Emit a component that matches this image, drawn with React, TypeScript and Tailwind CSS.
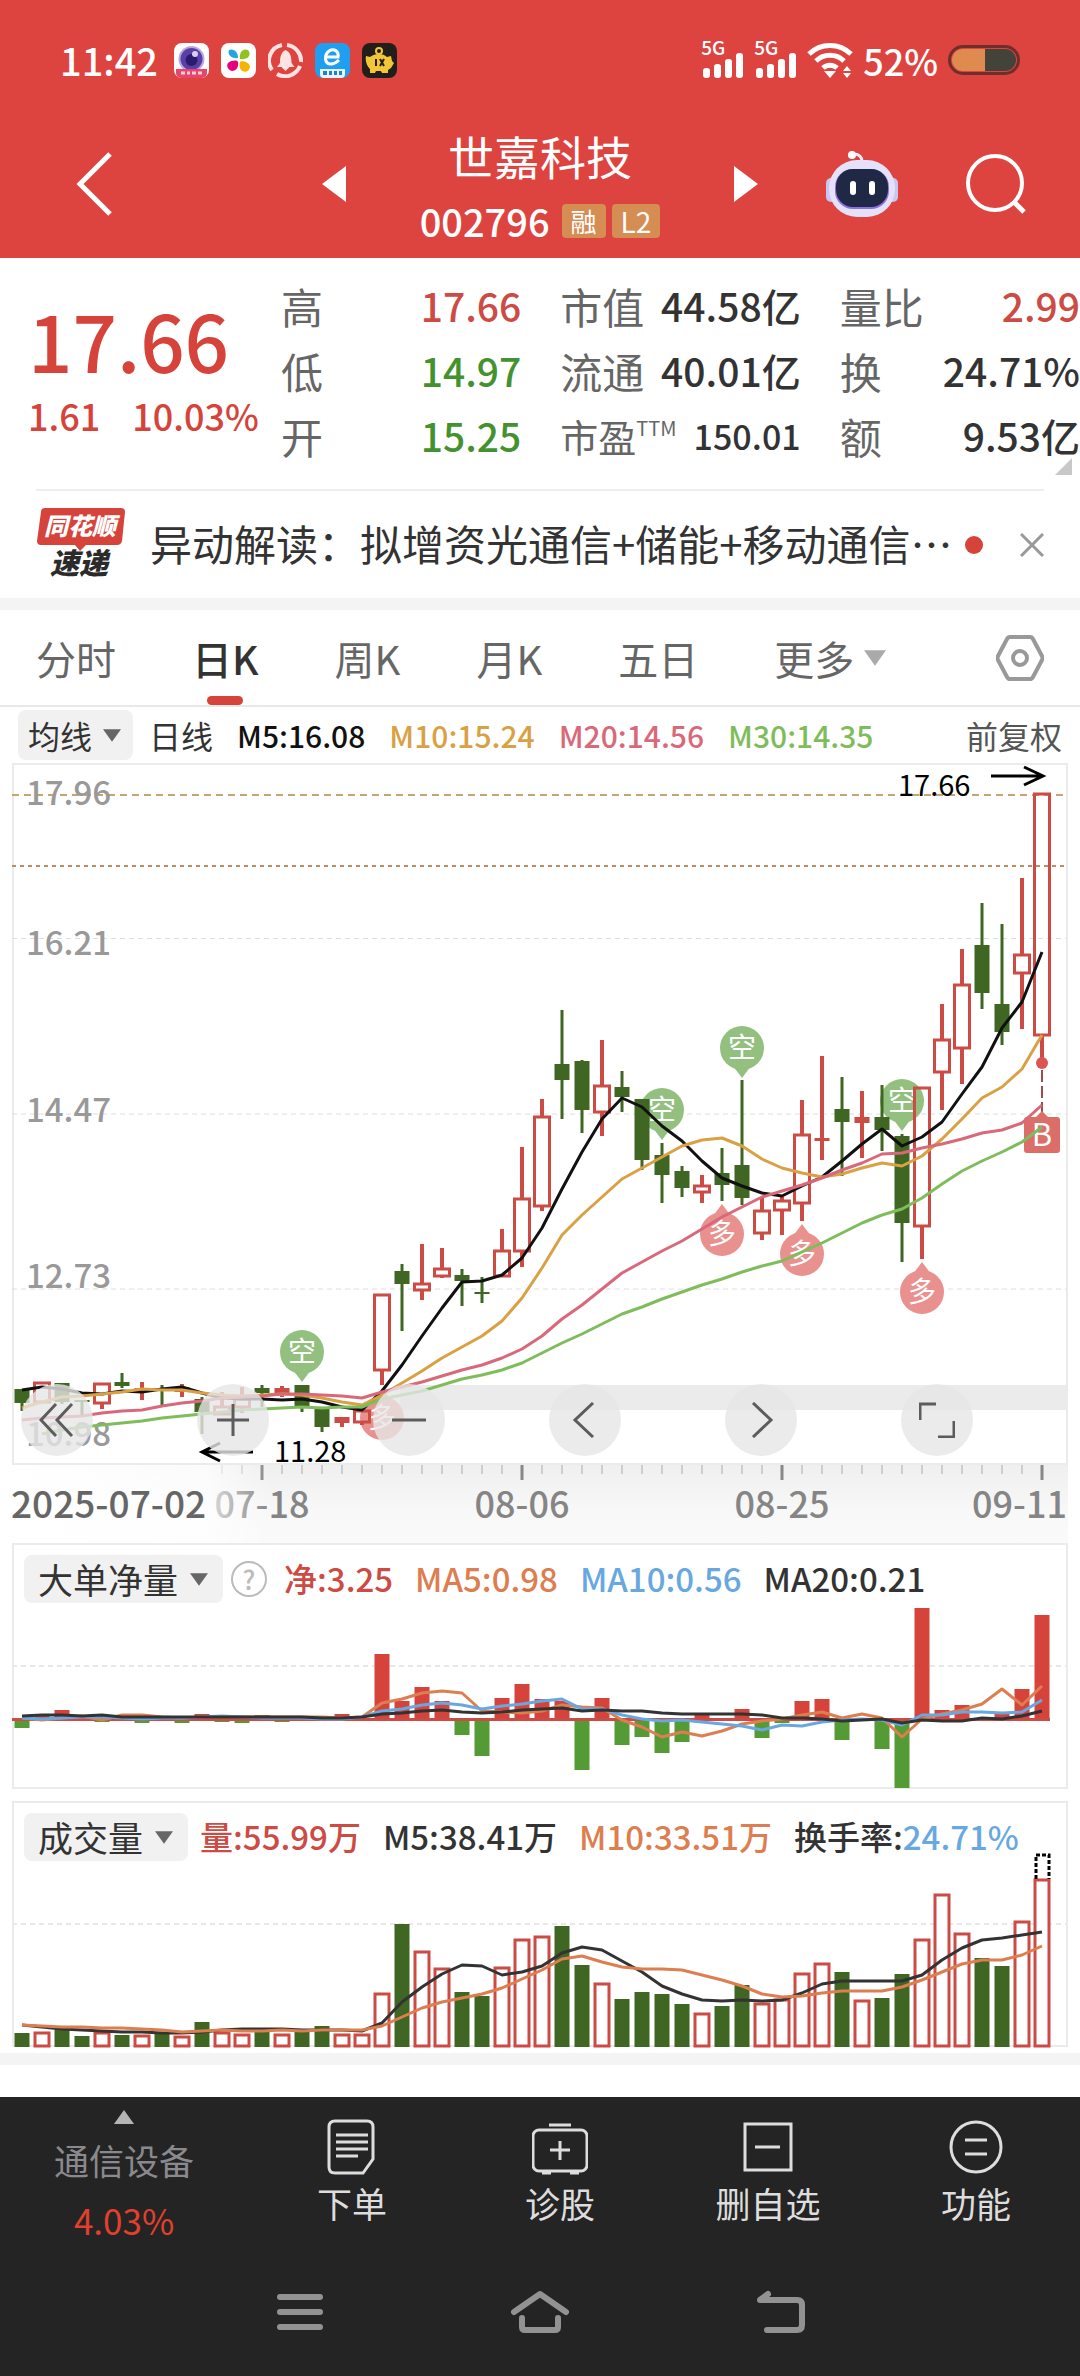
import type { ReactNode } from "react";

type Candle = [kind: "r" | "f" | "g", high: number, top: number, bottom: number, low: number];

// r = rising (hollow), f = rising with a thin filled body, g = falling
const candles: Candle[] = [
  ["g", 1389, 1389, 1403, 1411], ["r", 1383, 1383, 1402, 1402], ["g", 1383, 1383, 1402, 1404], ["g", 1400, 1400, 1402, 1415],
  ["r", 1384, 1384, 1403, 1409], ["g", 1373, 1382, 1386, 1388], ["f", 1382, 1388, 1391, 1400], ["g", 1385, 1388, 1390, 1406],
  ["f", 1384, 1387, 1392, 1397], ["g", 1397, 1399, 1412, 1434], ["r", 1392, 1407, 1414, 1414], ["r", 1387, 1399, 1407, 1413],
  ["g", 1385, 1388, 1393, 1407], ["f", 1386, 1388, 1393, 1397], ["g", 1385, 1385, 1406, 1412], ["g", 1409, 1409, 1427, 1432],
  ["f", 1417, 1417, 1423, 1427], ["r", 1411, 1411, 1422, 1425], ["r", 1295, 1295, 1370, 1385], ["g", 1264, 1271, 1284, 1331],
  ["r", 1244, 1284, 1290, 1300], ["r", 1248, 1269, 1276, 1278], ["g", 1269, 1275, 1281, 1306], ["g", 1277, 1292, 1294, 1303],
  ["r", 1229, 1251, 1276, 1276], ["r", 1147, 1199, 1251, 1267], ["r", 1099, 1117, 1206, 1211], ["g", 1010, 1064, 1080, 1119],
  ["g", 1060, 1061, 1110, 1133], ["r", 1040, 1086, 1112, 1136], ["g", 1071, 1087, 1097, 1112], ["g", 1099, 1099, 1160, 1170],
  ["g", 1143, 1155, 1175, 1203], ["g", 1166, 1171, 1188, 1197], ["r", 1175, 1186, 1192, 1203], ["g", 1148, 1173, 1185, 1201],
  ["g", 1080, 1165, 1198, 1205], ["r", 1197, 1211, 1233, 1240], ["r", 1197, 1201, 1210, 1235], ["r", 1100, 1135, 1203, 1221],
  ["f", 1056, 1138, 1141, 1160], ["g", 1077, 1109, 1122, 1176], ["f", 1091, 1117, 1123, 1158], ["g", 1085, 1117, 1130, 1151],
  ["g", 1134, 1136, 1223, 1262], ["r", 1088, 1088, 1226, 1259], ["r", 1004, 1040, 1072, 1110], ["r", 949, 985, 1048, 1084],
  ["g", 903, 945, 993, 1009], ["g", 924, 1004, 1032, 1045], ["r", 878, 955, 973, 1029], ["r", 794, 794, 1035, 1063],
];

const ma5 = [1390, 1387, 1389, 1393, 1394, 1391, 1392, 1389, 1387, 1393, 1398, 1399, 1399, 1400, 1399, 1402, 1407, 1410, 1391, 1365, 1336, 1308, 1282, 1281, 1275, 1258, 1228, 1189, 1152, 1119, 1098, 1107, 1126, 1141, 1161, 1178, 1186, 1193, 1196, 1186, 1177, 1161, 1144, 1129, 1146, 1137, 1122, 1094, 1067, 1028, 1002, 952];
const ma10 = [1408, 1402, 1397, 1396, 1394, 1392, 1389, 1390, 1390, 1393, 1395, 1396, 1395, 1394, 1395, 1398, 1402, 1405, 1395, 1383, 1371, 1358, 1347, 1336, 1321, 1298, 1268, 1235, 1215, 1197, 1179, 1168, 1157, 1146, 1140, 1138, 1146, 1159, 1168, 1173, 1177, 1174, 1168, 1163, 1166, 1156, 1139, 1119, 1098, 1087, 1069, 1035];
const ma20 = [1420, 1418, 1417, 1416, 1413, 1411, 1410, 1406, 1403, 1401, 1398, 1397, 1396, 1394, 1394, 1395, 1396, 1398, 1392, 1387, 1382, 1376, 1370, 1365, 1358, 1349, 1336, 1319, 1305, 1289, 1273, 1262, 1251, 1241, 1229, 1217, 1207, 1197, 1191, 1185, 1178, 1170, 1163, 1154, 1153, 1148, 1144, 1139, 1133, 1130, 1123, 1105];
const ma30 = [1434, 1430, 1427, 1425, 1423, 1421, 1418, 1416, 1414, 1412, 1410, 1409, 1408, 1407, 1408, 1407, 1407, 1399, 1395, 1391, 1385, 1379, 1375, 1370, 1363, 1353, 1343, 1334, 1324, 1314, 1307, 1299, 1292, 1285, 1279, 1272, 1266, 1261, 1252, 1243, 1233, 1223, 1215, 1209, 1198, 1184, 1171, 1161, 1152, 1142, 1127];

// net large-order flow, measured from the zero line
const flow = [-8, 5, 9, 0, -2, 0, -3, 0, -3, 5, -2, -3, 4, -2, 0, 0, 5, 1, 65, 18, 32, 18, -15, -36, 21, 35, 20, 18, -50, 21, -25, -17, -33, -22, 4, 0, 10, -18, -3, 18, 20, -20, 0, -29, -68, 111, 9, 14, 1, 5, 30, 104];
const flow5 = [1718, 1720, 1718, 1716, 1720, 1715, 1715, 1717, 1718, 1717, 1717, 1717, 1717, 1717, 1717, 1717, 1718, 1717, 1703, 1699, 1693, 1691, 1693, 1711, 1712, 1713, 1711, 1705, 1707, 1708, 1720, 1727, 1737, 1732, 1736, 1731, 1724, 1721, 1719, 1715, 1712, 1718, 1714, 1718, 1737, 1719, 1714, 1710, 1704, 1689, 1705, 1686];
const flow10 = [1718, 1719, 1718, 1717, 1717, 1718, 1719, 1718, 1718, 1717, 1716, 1717, 1718, 1718, 1718, 1719, 1719, 1717, 1711, 1709, 1705, 1703, 1705, 1709, 1706, 1704, 1701, 1699, 1709, 1709, 1715, 1719, 1721, 1720, 1722, 1724, 1726, 1730, 1725, 1726, 1722, 1720, 1719, 1720, 1725, 1715, 1715, 1712, 1712, 1713, 1712, 1700];
const flow20 = [1716, 1715, 1715, 1716, 1715, 1717, 1717, 1717, 1717, 1717, 1717, 1717, 1717, 1717, 1717, 1718, 1718, 1717, 1714, 1713, 1711, 1710, 1712, 1713, 1712, 1710, 1709, 1708, 1711, 1710, 1711, 1711, 1713, 1714, 1714, 1714, 1714, 1715, 1718, 1718, 1719, 1721, 1720, 1719, 1723, 1720, 1721, 1721, 1718, 1719, 1716, 1711];

const volume = [2033, 2032, 2028, 2036, 2032, 2035, 2035, 2033, 2036, 2022, 2032, 2034, 2031, 2034, 2031, 2026, 2034, 2034, 1993, 1924, 1951, 1968, 1992, 1996, 1967, 1939, 1936, 1926, 1965, 1983, 1999, 1992, 1994, 2004, 2013, 2006, 1985, 2003, 1999, 1973, 1963, 1972, 2000, 1998, 1974, 1939, 1894, 1933, 1958, 1966, 1921, 1879];
const volume5 = [2025, 2027, 2029, 2030, 2031, 2032, 2032, 2033, 2033, 2032, 2030, 2029, 2029, 2029, 2030, 2030, 2030, 2031, 2023, 2002, 1987, 1974, 1965, 1966, 1975, 1972, 1966, 1953, 1947, 1950, 1961, 1972, 1986, 1994, 2000, 2001, 2000, 2001, 2000, 1993, 1984, 1981, 1981, 1981, 1981, 1975, 1960, 1948, 1940, 1938, 1935, 1932];
const volume10 = [2025, 2026, 2027, 2027, 2028, 2028, 2029, 2030, 2032, 2031, 2030, 2031, 2031, 2030, 2031, 2030, 2030, 2030, 2026, 2017, 2008, 2002, 1998, 1994, 1988, 1979, 1970, 1959, 1956, 1962, 1967, 1969, 1969, 1970, 1975, 1980, 1986, 1994, 1997, 1996, 1993, 1991, 1991, 1991, 1987, 1980, 1972, 1964, 1960, 1960, 1955, 1946];

const barX = (i: number) => 22 + i * 20;
const toPoints = (ys: number[], start = 0) => ys.map((y, i) => `${barX(i + start)},${y}`).join(" ");

const RED = "#cc4b44";
const GREEN = "#3f6622";
const CJK = "'Noto Sans CJK SC', sans-serif";

function Line({ ys, color, start = 0 }: { ys: number[]; color: string; start?: number }) {
  return <polyline points={toPoints(ys, start)} fill="none" stroke={color} strokeWidth="3" strokeLinejoin="round" />;
}

function Caret({ className, up }: { className: string; up?: boolean }) {
  return (
    <svg viewBox="0 0 20 14" className={className} fill="currentColor" aria-hidden="true">
      <path d={up ? "M10 0L20 14H0z" : "M0 0h20L10 14z"} />
    </svg>
  );
}

function Picker({ label, options, small }: { label: string; options: string[]; small?: boolean }) {
  return (
    <label className="relative flex items-center shrink-0">
      <select
        aria-label={label}
        className={
          small
            ? "appearance-none h-[50px] pl-[10px] pr-10 rounded-lg bg-[#f1f1f1] text-[32px] leading-[44px] font-normal text-[#333]"
            : "appearance-none h-12 pl-[14px] pr-11 rounded-lg bg-[#f1f1f1] text-[35px] leading-[44px] font-normal text-[#333]"
        }
      >
        {options.map((option) => (
          <option key={option}>{option}</option>
        ))}
      </select>
      <Caret className={small ? "absolute right-3 w-[18px] h-[13px] text-[#666] pointer-events-none" : "absolute right-[15px] w-[18px] h-[13px] text-[#666] pointer-events-none"} />
    </label>
  );
}

function Signal() {
  return (
    <div className="relative w-[43px] h-9 shrink-0">
      <span className="absolute left-0 -top-[5px] text-[19px] leading-5 font-medium">5G</span>
      <svg viewBox="0 0 43 36" className="w-full h-full" fill="#fff" aria-hidden="true">
        <rect x="2" y="26" width="7" height="10" rx="3" />
        <rect x="13" y="22" width="7" height="14" rx="3" />
        <rect x="24" y="17" width="7" height="19" rx="3" />
        <rect x="35" y="11" width="7" height="25" rx="3" />
      </svg>
    </div>
  );
}

function StatusBar() {
  return (
    <div className="flex items-center justify-between h-[120px] px-[60px] text-white">
      <div className="flex items-center gap-3">
        <span className="text-[38px] leading-[44px] font-medium mr-1">11:42</span>
        <svg viewBox="0 0 35 35" className="w-[35px] h-[35px]">
          <rect width="35" height="35" rx="8" fill="#fff" />
          <circle cx="17.5" cy="16" r="13" fill="#b9a8dd" />
          <circle cx="17.5" cy="16" r="11" fill="#5a3fa8" />
          <circle cx="17.5" cy="17" r="6" fill="#2a1c6b" />
          <circle cx="21" cy="11" r="3" fill="#d9cdf5" />
          <path d="M2 26h31v4a5 5 0 0 1-5 5H7a5 5 0 0 1-5-5z" fill="#e8456a" />
          <path d="M7 30h4M13 30h3M18 30h4M24 30h4" stroke="#ffd0da" strokeWidth="3" />
        </svg>
        <svg viewBox="0 0 35 35" className="w-[35px] h-[35px]">
          <rect width="35" height="35" rx="8" fill="#fff" />
          <path d="M8 7c5-2 9 2 9 8-6 1-11-3-9-8z" fill="#25a5e0" />
          <path d="M27 7c4 5 0 10-8 9-1-7 3-11 8-9z" fill="#8fc31f" />
          <path d="M7 20c4-3 9-3 10-1 1 5-2 9-6 9-4-1-6-5-4-8z" fill="#e4007f" />
          <path d="M20 18c5 0 9 3 9 6-1 5-6 6-9 3-2-3-2-7 0-9z" fill="#f8b500" />
        </svg>
        <svg viewBox="0 0 35 35" className="w-[35px] h-[35px]" fill="none">
          <path d="M14 2A16 16 0 0 0 4 27M9 31a16 16 0 0 0 23-8M33 19A16 16 0 0 0 19 2" stroke="#ffe3e3" strokeWidth="4" />
          <path d="M17.500 7c5 2 6 7 6 13l3 4h-5l-4 4-4-4H9l3-4c0-6 1-11 5.500-13z" fill="#ffe3e3" />
        </svg>
        <svg viewBox="0 0 35 35" className="w-[35px] h-[35px]" fill="none">
          <rect width="35" height="35" rx="8" fill="#1f9ff0" />
          <path d="M12 14h11c1-6-4-9-9-6-5 4-5 13 2 13 3 0 6-2 8-4" stroke="#fff" strokeWidth="3" />
          <path d="M5 26h25v5a4 4 0 0 1-4 4H9a4 4 0 0 1-4-4z" fill="#e8f6ff" />
          <path d="M8 30h4M14 30h3M19 30h3M24 30h3" stroke="#1f7fd0" strokeWidth="4" />
        </svg>
        <svg viewBox="0 0 35 35" className="w-[35px] h-[35px]">
          <rect width="35" height="35" rx="8" fill="#221f1b" />
          <circle cx="17" cy="8" r="3" fill="none" stroke="#f3c63a" strokeWidth="2" />
          <path d="M4 13l4 1c5-4 13-4 17 0l4-1 1 5 2 2-3 5-3 2v3h-6l-1-2h-5l-1 2H8v-4c-3-3-5-8-4-13z" fill="#f3c63a" />
          <path d="M14 16v7M18 16l4 7M22 16l-4 7" stroke="#221f1b" strokeWidth="2" />
        </svg>
      </div>
      <div className="flex items-center gap-[10px]">
        <Signal />
        <Signal />
        <svg viewBox="0 0 46 36" className="w-[46px] h-9" fill="none" stroke="#fff" strokeWidth="5" aria-label="WLAN">
          <path d="M2 12a30 30 0 0 1 42 0M9 19a20 20 0 0 1 28 0M16 26a10 10 0 0 1 14 0" />
          <path d="M17 29h12l-6 7zM36 29l4-5 4 5zM36 31h8l-4 5z" fill="#fff" stroke="none" />
        </svg>
        <span className="text-[36px] leading-[44px] font-medium">52%</span>
        <svg viewBox="0 0 72 30" className="w-[72px] h-[30px]" aria-label="Battery">
          <rect x="1.500" y="1.500" width="69" height="27" rx="13.500" fill="none" stroke="#6e2f2c" strokeWidth="3" />
          <path d="M37 4H15a11 11 0 0 0 0 22h22z" fill="#df8a4f" />
          <path d="M37 4h20a11 11 0 0 1 0 22H37z" fill="#43433a" />
        </svg>
      </div>
    </div>
  );
}

function TitleBar() {
  return (
    <div className="grid grid-cols-[1fr_auto_1fr] items-center h-[138px] pb-[10px] text-white">
      <div className="pl-[76px] flex">
        <button aria-label="返回">
          <svg viewBox="0 0 36 64" className="w-9 h-16" fill="none" stroke="#fff" strokeWidth="5">
            <path d="M34 2L4 32l30 30" />
          </svg>
        </button>
      </div>
      <div className="flex items-center justify-between w-[437px]">
        <button aria-label="上一只">
          <svg viewBox="0 0 24 36" className="w-6 h-9" fill="#fff"><path d="M24 0v36L0 18z" /></svg>
        </button>
        <div className="flex flex-col items-center">
          <h1 className="text-[46px] leading-[50px]">世嘉科技</h1>
          <div className="mt-6 flex items-center gap-[6px]">
            <span className="text-[38px] leading-[34px] font-medium mr-[6px]">002796</span>
            <span className="bg-[#d68d54] rounded px-[9px] text-[26px] leading-[34px]">融</span>
            <span className="bg-[#d68d54] rounded px-[9px] text-[28px] leading-[34px]">L2</span>
          </div>
        </div>
        <button aria-label="下一只">
          <svg viewBox="0 0 24 36" className="w-6 h-9" fill="#fff"><path d="M0 0v36l24-18z" /></svg>
        </button>
      </div>
      <div className="flex items-center justify-end gap-[68px] pr-[54px]">
        <button aria-label="智能助手">
          <svg viewBox="0 0 72 68" className="w-[72px] h-[68px]">
            <path d="M36 12c0-6-3-8-9-8" fill="none" stroke="#f4ecfa" strokeWidth="3" />
            <circle cx="26" cy="5" r="4" fill="#fff" />
            <rect x="0" y="28" width="10" height="24" rx="5" fill="#c9c6f2" />
            <rect x="62" y="28" width="10" height="24" rx="5" fill="#c9c6f2" />
            <rect x="3" y="10" width="66" height="57" rx="28" fill="#e4e1f9" />
            <rect x="9" y="19" width="54" height="40" rx="18" fill="#8d6fe0" />
            <rect x="10" y="19" width="52" height="38" rx="17" fill="#1f2946" />
            <rect x="24" y="31" width="6" height="14" rx="3" fill="#fff" />
            <rect x="43" y="31" width="6" height="14" rx="3" fill="#fff" />
          </svg>
        </button>
        <button aria-label="搜索">
          <svg viewBox="0 0 60 60" className="w-[60px] h-[60px]" fill="none" stroke="#fff" strokeWidth="4">
            <circle cx="29" cy="29" r="27" />
            <path d="M47 47l11 11" strokeWidth="5" />
          </svg>
        </button>
      </div>
    </div>
  );
}

function Stat({ label, value, tone = "text-[#333]" }: { label: ReactNode; value: string; tone?: string }) {
  return (
    <div className="flex items-center justify-between h-[65px] whitespace-nowrap">
      <dt className="text-[42px] leading-[65px] text-[#666]">{label}</dt>
      <dd className={`text-[39px] leading-[65px] font-medium ${tone}`}>{value}</dd>
    </div>
  );
}

function Quote() {
  return (
    <section className="relative grid grid-cols-[242px_1fr_1fr_1fr] gap-x-[39px] pt-[15px] pb-[21px]">
      <div className="pl-7 pt-[26px] text-[#d5433b] whitespace-nowrap">
        <div className="text-[78px] leading-[80px] font-medium">17.66</div>
        <div className="mt-[14px] flex gap-8 text-[36px] leading-[44px] font-medium">
          <span>1.61</span>
          <span>10.03%</span>
        </div>
      </div>
      <dl>
        <Stat label="高" value="17.66" tone="text-[#cc4b44]" />
        <Stat label="低" value="14.97" tone="text-[#44922f]" />
        <Stat label="开" value="15.25" tone="text-[#44922f]" />
      </dl>
      <dl>
        <Stat label="市值" value="44.58亿" />
        <Stat label="流通" value="40.01亿" />
        <div className="flex items-center justify-between h-[65px] whitespace-nowrap">
          <dt className="flex text-[38px] leading-[65px] text-[#666]">
            市盈<span className="text-[20px] leading-[50px]">TTM</span>
          </dt>
          <dd className="text-[34px] leading-[65px] font-medium text-[#333]">150.01</dd>
        </div>
      </dl>
      <dl>
        <Stat label="量比" value="2.99" tone="text-[#cc4b44]" />
        <Stat label="换" value="24.71%" />
        <Stat label="额" value="9.53亿" />
      </dl>
      <svg viewBox="0 0 17 17" className="absolute right-2 bottom-[14px] w-[17px] h-[17px]" fill="#c8c8c8">
        <path d="M17 0v17H0z" />
      </svg>
    </section>
  );
}

function News() {
  return (
    <section className="mx-9 h-[109px] border-t-2 border-[#eee] flex items-center">
      <svg viewBox="0 0 90 76" className="w-[90px] h-[76px] shrink-0" fontFamily={CJK} fontWeight="900" fontStyle="italic">
        <path d="M9 1h76q4 0 4 4l-3 29q-1 4-5 4H50l-6 6-5-6H5q-4 0-4-4L5 5q0-4 4-4z" fill="#d5433b" />
        <text x="44" y="28" fontSize="24" textAnchor="middle" fill="#fff">同花顺</text>
        <text x="43" y="67" fontSize="29" textAnchor="middle" fill="#2b2b2b">速递</text>
      </svg>
      <a href="#news" className="ml-[24px] pb-1 text-[42px] leading-[60px] text-[#333] whitespace-nowrap">异动解读：拟增资光通信+储能+移动通信…</a>
      <span className="ml-3 w-[18px] h-[18px] rounded-full bg-[#d5433b] shrink-0" />
      <button aria-label="关闭" className="ml-auto">
        <svg viewBox="0 0 24 24" className="w-6 h-6" fill="none" stroke="#999" strokeWidth="3">
          <path d="M1 1l22 22M23 1L1 23" />
        </svg>
      </button>
    </section>
  );
}

const tabs = ["分时", "日K", "周K", "月K", "五日"];

function Tabs() {
  return (
    <nav className="flex items-stretch h-[97px] px-9 gap-[76px] border-b-2 border-[#e8e8e8] text-[40px] text-[#666]">
      {tabs.map((tab) =>
        tab === "日K" ? (
          <button key={tab} aria-current="page" className="relative font-medium text-[#333]">
            {tab}
            <span className="absolute left-1/2 bottom-0 -translate-x-1/2 w-9 h-[9px] rounded-full bg-[#d5433b]" />
          </button>
        ) : (
          <button key={tab}>{tab}</button>
        )
      )}
      <button aria-haspopup="menu" className="flex items-center gap-[10px]">
        更多
        <Caret className="w-[22px] h-[18px] text-[#aaa]" />
      </button>
      <button aria-label="设置" className="ml-auto">
        <svg viewBox="0 0 48 46" className="w-12 h-[46px]" fill="none" stroke="#999" strokeWidth="4">
          <path d="M14 2h20q2 0 3 2l9 17q1 2 0 4l-9 17q-1 2-3 2H14q-2 0-3-2L2 25q-1-2 0-4l9-17q1-2 3-2z" />
          <circle cx="24" cy="23" r="7" />
        </svg>
      </button>
    </nav>
  );
}

function Pin({ x, tip, bull }: { x: number; tip: number; bull?: boolean }) {
  const cy = bull ? tip + 30 : tip - 30;
  return (
    <g>
      <circle cx={x} cy={cy} r="22" fill={bull ? "#e8918e" : "#93c07f"} />
      <path
        d={bull ? `M${x} ${tip}l9 12h-18z` : `M${x} ${tip}l9-12h-18z`}
        fill={bull ? "#e8918e" : "#93c07f"}
      />
      <text x={x} y={cy + 10} fontSize="28" textAnchor="middle" fill="#fff">{bull ? "多" : "空"}</text>
    </g>
  );
}

function KLine() {
  return (
    <svg viewBox="14 765 1052 698" className="block w-full h-auto overflow-visible" fontFamily={CJK}>
      <path d="M12 795h1054" stroke="#c4a473" strokeWidth="2" strokeDasharray="7 5" />
      <path d="M12 866h1054" stroke="#bd8f60" strokeWidth="2" strokeDasharray="4 4" />
      <path d="M12 938.500h1054M12 1114h1054M12 1289h1054" stroke="#dedede" strokeWidth="1" strokeDasharray="5 4" />
      <rect x="400" y="1385" width="668" height="25" fill="#ebebeb" />

      <g fontSize="33" fontWeight="500" fill="#999">
        <text x="26" y="805">17.96</text>
        <text x="26" y="955">16.21</text>
        <text x="26" y="1122">14.47</text>
        <text x="26" y="1288">12.73</text>
        <text x="26" y="1446">10.98</text>
      </g>

      <Pin x={302} tip={1382} />
      <Pin x={662} tip={1140} />
      <Pin x={742} tip={1078} />
      <Pin x={902} tip={1131} />
      <Pin x={382} tip={1388} bull />
      <Pin x={722} tip={1204} bull />
      <Pin x={802} tip={1224} bull />
      <Pin x={922} tip={1262} bull />

      <path d="M1042 1070v45" stroke="#a04a4a" strokeWidth="2" strokeDasharray="12 4" />
      <path d="M1042 1111l6 6h-12z" fill="#dc6e69" />
      <rect x="1024" y="1117" width="36" height="36" rx="3" fill="#dc6e69" />
      <text x="1042" y="1146" fontSize="31" textAnchor="middle" fill="#fff">B</text>

      {candles.map(([kind, high, top, bottom, low], i) => {
        const x = barX(i);
        const color = kind === "g" ? GREEN : RED;
        return (
          <g key={i}>
            <path d={`M${x} ${high}V${top}M${x} ${bottom}V${low}`} stroke={color} strokeWidth={kind === "g" ? 3 : 4} />
            {kind === "r" ? (
              <rect x={x - 7.5} y={top} width="15" height={bottom - top} fill="none" stroke={color} strokeWidth="3" />
            ) : (
              <rect x={x - 7.5} y={top} width="15" height={bottom - top} fill={color} />
            )}
          </g>
        );
      })}
      <circle cx="1042" cy="1063" r="6" fill="#dc5550" />

      <Line ys={ma5} color="#111" />
      <Line ys={ma10} color="#d9a144" />
      <Line ys={ma20} color="#d9687a" />
      <Line ys={ma30} color="#7fbd5c" start={1} />

      <g fontSize="29" fill="#000">
        <text x="898" y="796">17.66</text>
        <text x="274" y="1462">11.28</text>
      </g>
      <path d="M991 776h51M1024 767l19 9-19 9M253 1452h-50M220 1443l-18 9 18 9" fill="none" stroke="#000" strokeWidth="3" />
    </svg>
  );
}

const controls = [
  { label: "快退", d: "M17 2L2 18l15 16M33 2L18 18l15 16" },
  { label: "放大", d: "M18 2v32M2 18h32" },
  { label: "缩小", d: "M1 18h34" },
  { label: "左移", d: "M26 1L8 18l18 17" },
  { label: "右移", d: "M10 1l18 17-18 17" },
  { label: "全屏", d: "M1 18V2h16M35 19v16H19" },
];

function DateAxis() {
  const ticks = Array.from({ length: 42 }, (_, i) => 222 + i * 20);
  return (
    <svg viewBox="12 1465 1056 78" className="block w-full h-auto" fontFamily={CJK} fontSize="36" fontWeight="500">
      <defs>
        <linearGradient id="shade" x2="0" y2="1">
          <stop offset="0" stopColor="#efefef" />
          <stop offset="0.600" stopColor="#f8f8f8" />
          <stop offset="1" stopColor="#fafafa" />
        </linearGradient>
        <linearGradient id="fade">
          <stop offset="0" stopColor="#fff" />
          <stop offset="0.750" stopColor="#fff" stopOpacity="0.750" />
          <stop offset="1" stopColor="#fff" stopOpacity="0" />
        </linearGradient>
      </defs>
      <rect x="12" y="1465" width="1056" height="78" fill="url(#shade)" />
      {ticks.map((x) =>
        (x - 2) % 260 === 0 ? (
          <path key={x} d={`M${x} 1465v15`} stroke="#888" strokeWidth="3" />
        ) : (
          <path key={x} d={`M${x} 1465v9`} stroke="#aaa" strokeWidth="1" />
        )
      )}
      <g fill="#858585" textAnchor="middle">
        <text x="262" y="1518">07-18</text>
        <text x="522" y="1518">08-06</text>
        <text x="782" y="1518">08-25</text>
        <text x="1067" y="1518" textAnchor="end">09-11</text>
      </g>
      <rect x="12" y="1465" width="258" height="78" fill="url(#fade)" />
      <text x="11" y="1518" fontSize="37" fill="#666">2025-07-02</text>
    </svg>
  );
}

function FlowChart() {
  return (
    <svg viewBox="14 1603 1052 184" className="block w-full h-auto overflow-visible">
      <path d="M12 1666h1054" stroke="#e8e8e8" strokeWidth="2" strokeDasharray="5 4" />
      {flow.map((v, i) => (
        <rect key={i} x={barX(i) - 7.5} y={v > 0 ? 1719 - v : 1720} width="15" height={Math.abs(v)} fill={v > 0 ? "#d5433b" : "#549a35"} />
      ))}
      <path d="M12 1719.500h1038" stroke="#cc4b44" strokeWidth="3" />
      <Line ys={flow5} color="#dd7e50" />
      <Line ys={flow10} color="#68a8e0" />
      <Line ys={flow20} color="#333" />
    </svg>
  );
}

function VolumeChart() {
  return (
    <svg viewBox="14 1861 1052 184" className="block w-full h-auto overflow-visible">
      <path d="M12 1924h1054" stroke="#e8e8e8" strokeWidth="2" strokeDasharray="5 4" />
      {volume.map((y, i) =>
        candles[i][0] === "g" ? (
          <rect key={i} x={barX(i) - 7.5} y={y} width="15" height={2047 - y} fill={GREEN} />
        ) : (
          <rect key={i} x={barX(i) - 7} y={y + 1} width="14" height={2046 - y - 1} fill="#fff" stroke={RED} strokeWidth="3" />
        )
      )}
      <path d="M1036 1879v-24h13v24" fill="none" stroke="#000" strokeWidth="3" strokeDasharray="4 2" />
      <Line ys={volume5} color="#333" />
      <Line ys={volume10} color="#dd7e50" />
    </svg>
  );
}

const actions = [
  { label: "下单", icon: <><path d="M10 2h32q6 0 6 6v32L38 54H10q-6 0-6-6V8q0-6 6-6z" /><path d="M11 16h32M11 23h32M11 30h32M11 37h22" /></> },
  { label: "诊股", icon: <><rect x="0" y="11" width="54" height="41" rx="6" /><path d="M16 6h22M27 22v19M17 31h20M9 54h9M37 54h9" /></> },
  { label: "删自选", icon: <><rect x="4" y="5" width="46" height="46" /><path d="M14 28h25" /></> },
  { label: "功能", icon: <><circle cx="27" cy="28" r="25" /><path d="M16 21h22M16 35h22" /></> },
];

function Footer() {
  return (
    <footer className="flex-1 bg-[#242424]">
      <div className="grid grid-cols-[248fr_208fr_208fr_208fr_208fr] h-[156px]">
        <button className="flex flex-col items-center pt-[13px] text-[35px]">
          <Caret up className="w-7 h-[14px] text-[#b5b5b5]" />
          <span className="mt-[14px] leading-[44px] text-[#8a8a8e]">通信设备</span>
          <span className="mt-4 leading-[44px] text-[#e0402d]">4.03%</span>
        </button>
        {actions.map((action) => (
          <button key={action.label} className="flex flex-col items-center pt-[22px] text-[35px] text-[#ddd]">
            <svg viewBox="-1 0 56 56" className="w-14 h-14" fill="none" stroke="currentColor" strokeWidth="3" aria-hidden="true">
              {action.icon}
            </svg>
            <span className="mt-[6px] leading-[44px]">{action.label}</span>
          </button>
        ))}
      </div>
      <div className="grid grid-cols-3 h-[118px] mx-[180px] mb-[5px] text-[#929292]">
        <button aria-label="最近任务" className="flex items-center justify-center">
          <svg viewBox="0 0 46 38" className="w-[46px] h-[38px]" stroke="currentColor" strokeWidth="6" strokeLinecap="round">
            <path d="M3 4h40M3 19h40M3 34h40" />
          </svg>
        </button>
        <button aria-label="主屏幕" className="flex items-center justify-center">
          <svg viewBox="0 0 58 44" className="w-[58px] h-11" fill="none" stroke="currentColor" strokeWidth="6" strokeLinecap="round" strokeLinejoin="round">
            <path d="M3 22L29 4l26 18M11 28v9q0 3 3 3h30q3 0 3-3v-9" />
          </svg>
        </button>
        <button aria-label="返回桌面" className="flex items-center justify-center">
          <svg viewBox="0 0 50 44" className="w-[50px] h-11" fill="none" stroke="currentColor" strokeWidth="6" strokeLinecap="round" strokeLinejoin="round">
            <path d="M12 40h30q5 0 5-5V15q0-5-5-5H5l8-6" />
          </svg>
        </button>
      </div>
    </footer>
  );
}

export default function App() {
  return (
    <div lang="zh-CN" className="min-h-screen flex flex-col bg-white overflow-x-hidden font-['Noto_Sans_CJK_SC',sans-serif]">
      <header className="bg-[#dd4440]">
        <StatusBar />
        <TitleBar />
      </header>
      <Quote />
      <News />
      <div className="h-3 bg-[#f4f4f4]" />
      <Tabs />

      <div className="flex items-center h-14 px-[18px] text-[30px] font-medium whitespace-nowrap">
        <Picker small label="指标" options={["均线"]} />
        <span className="ml-4 text-[32px] font-normal text-[#333]">日线</span>
        <div className="ml-6 flex gap-6">
          <span className="text-[#111]">M5:16.08</span>
          <span className="text-[#d9a144]">M10:15.24</span>
          <span className="text-[#d9687a]">M20:14.56</span>
          <span className="text-[#7fbd5c]">M30:14.35</span>
        </div>
        <button className="ml-auto text-[32px] font-normal text-[#555]">前复权</button>
      </div>

      <div className="relative mx-3 border-2 border-[#ebebeb]">
        <KLine />
        <div className="absolute left-[7px] bottom-[7px] flex gap-[104px]">
          {controls.map((control) => (
            <button key={control.label} aria-label={control.label} className="flex items-center justify-center w-[72px] h-[72px] rounded-full bg-[#e6e6e6]/80">
              <svg viewBox="0 0 36 36" className="w-9 h-9" fill="none" stroke="#5c5c5c" strokeWidth="3">
                <path d={control.d} />
              </svg>
            </button>
          ))}
        </div>
      </div>
      <div className="mx-3">
        <DateAxis />
      </div>

      <section className="mx-3 border-2 border-[#ebebeb]">
        <div className="flex items-center h-[58px] pt-[10px] pl-[10px] text-[33px] font-medium whitespace-nowrap">
          <Picker label="副图一" options={["大单净量"]} />
          <button aria-label="说明" className="ml-2 flex items-center justify-center w-9 h-9 rounded-full border-2 border-[#bbb] text-[26px] leading-[32px] text-[#bbb]">?</button>
          <div className="ml-[17px] flex gap-[22px]">
            <span className="text-[#cc4b44]">净:3.25</span>
            <span className="text-[#dd7e50]">MA5:0.98</span>
            <span className="text-[#68a8e0]">MA10:0.56</span>
            <span className="text-[#333]">MA20:0.21</span>
          </div>
        </div>
        <FlowChart />
      </section>

      <section className="mx-3 mt-3 border-2 border-[#ebebeb]">
        <div className="flex items-center h-[58px] pt-[10px] pl-[10px] text-[33px] font-medium whitespace-nowrap">
          <Picker label="副图二" options={["成交量"]} />
          <div className="ml-3 flex gap-[22px]">
            <span className="text-[#cc4b44]">量:55.99万</span>
            <span className="text-[#333]">M5:38.41万</span>
            <span className="text-[#dd7e50]">M10:33.51万</span>
            <span className="text-[#333]">换手率:<span className="text-[#68a8e0]">24.71%</span></span>
          </div>
        </div>
        <VolumeChart />
      </section>

      <div className="mt-[6px] mb-8 h-3 bg-[#f4f4f4]" />
      <Footer />
    </div>
  );
}
